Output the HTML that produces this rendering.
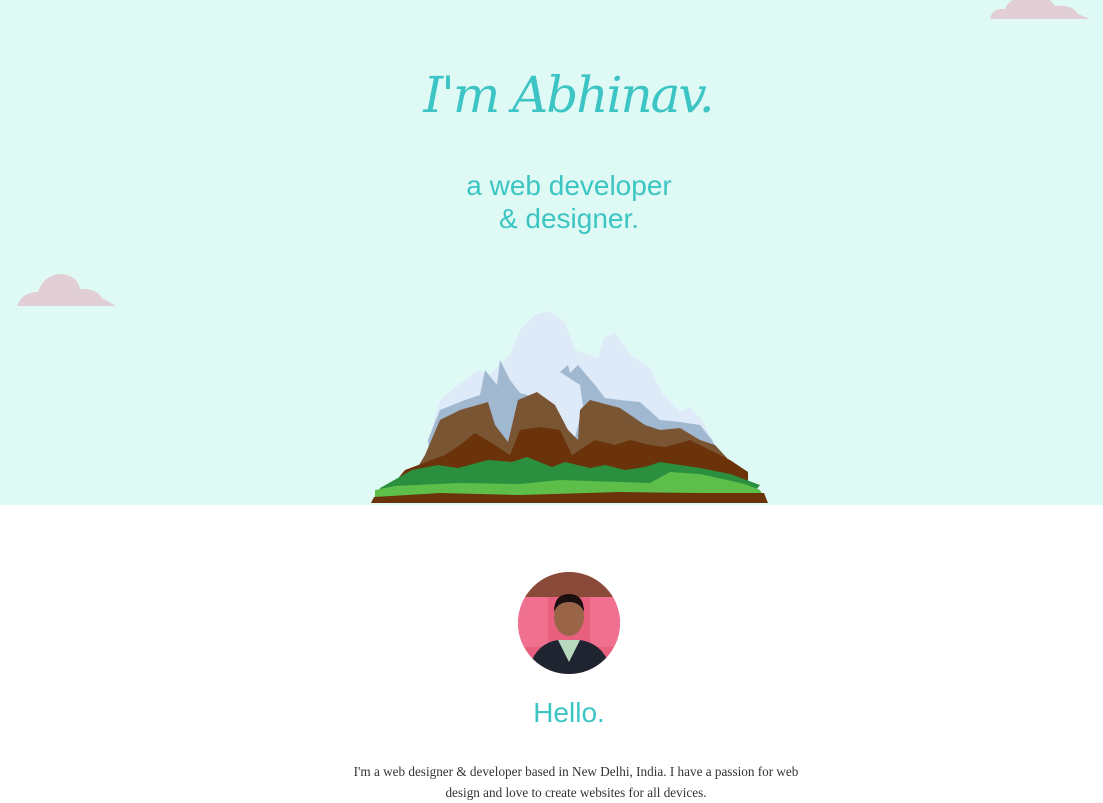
<!DOCTYPE html>
<html><head><meta charset="utf-8"><style>
body{margin:0;width:1103px;height:803px;overflow:hidden;background:#fff;font-family:"Liberation Sans",sans-serif}
.hero{position:absolute;left:0;top:0;width:1103px;height:505px;background:#dffaf5}
h1{position:absolute;top:66px;left:0;width:1136px;text-align:center;margin:0;font:italic 400 50px "DejaVu Serif","Liberation Serif",serif;color:#3cc5c4;letter-spacing:-2px}
.sub{position:absolute;top:169px;left:0;width:1138px;text-align:center;font-size:28px;line-height:33px;color:#3cc5c3}
.hello{position:absolute;top:697px;left:0;width:1138px;text-align:center;font-size:28px;color:#3cc5c3}
.p{position:absolute;top:761px;left:0;width:1152px;text-align:center;font:13.2px/21px "Liberation Serif",serif;color:#333}
</style></head><body>
<div class="hero"></div>
<svg style="position:absolute;left:0;top:0" width="1103" height="510">
<g fill="#e2cfd6">
<path d="M990 19 Q992 8 1005 9 Q1010 -4 1030 -3 Q1048 -6 1055 6 Q1072 4 1078 14 L1090 19Z"/>
<path d="M17 306 Q22 292 38 292 Q44 274 62 274 Q78 276 80 289 Q96 288 102 298 L116 306Z"/>
</g>
<polygon fill="#dfeaf8" points="428,440 440,400 458,385 478,370 490,375 510,355 520,330 535,315 548,311 565,322 575,350 598,358 604,338 616,333 630,355 650,368 662,393 680,412 690,407 702,420 712,440 720,455 430,455"/>
<polygon fill="#a0b8d0" points="428,440 440,410 465,400 480,395 485,370 497,385 500,360 510,380 520,393 545,400 560,420 575,438 583,405 580,385 560,372 568,365 570,373 578,365 595,385 605,398 620,400 640,402 660,420 680,422 700,425 712,440 720,455 430,460"/>
<polygon fill="#7a5534" points="425,455 440,420 460,410 488,402 495,425 508,442 518,400 537,392 555,405 568,430 578,440 580,410 590,400 620,408 645,425 660,430 680,428 700,440 715,445 738,470 410,480"/>
<polygon fill="#6b3309" points="405,470 445,455 460,445 475,433 495,445 510,455 520,430 540,427 560,430 572,455 595,440 615,445 630,440 650,445 665,447 690,440 700,445 730,460 748,472 748,500 380,500"/>
<polygon fill="#2a8f3f" points="380,488 412,470 438,465 458,468 488,460 512,462 527,457 552,467 565,462 590,468 605,465 625,470 645,467 660,462 700,468 730,474 760,485 752,495 380,495"/>
<polygon fill="#5dbf4a" points="375,490 395,486 460,483 520,484 560,480 620,482 650,483 670,472 700,474 745,484 760,490 763,495 375,497"/>
<polygon fill="#6b3309" points="374,497 440,493 520,495 620,492 700,493 764,493 768,503 371,503"/>
</svg>
<h1>I'm Abhinav.</h1>
<div class="sub">a web developer<br>&amp; designer.</div>
<svg style="position:absolute;left:518px;top:572px" width="102" height="102">
<defs><clipPath id="c"><circle cx="51" cy="51" r="51"/></clipPath></defs>
<g clip-path="url(#c)">
<rect width="102" height="102" fill="#e8607e"/>
<rect x="0" y="0" width="102" height="25" fill="#8a4a3a"/>
<rect x="0" y="25" width="30" height="50" fill="#f07090"/>
<rect x="72" y="25" width="30" height="50" fill="#f07090"/>
<path d="M10 102 Q15 72 40 68 L62 68 Q88 72 94 102Z" fill="#1e2430"/>
<path d="M40 68 L51 90 L62 68Z" fill="#b8d8c0"/>
<ellipse cx="51" cy="45" rx="15" ry="19" fill="#9a6448"/>
<path d="M36 40 Q36 22 51 22 Q66 22 66 40 Q62 30 51 30 Q40 30 36 40Z" fill="#1a1010"/>
</g></svg>
<div class="hello">Hello.</div>
<div class="p">I'm a web designer &amp; developer based in New Delhi, India. I have a passion for web<br>design and love to create websites for all devices.</div>
</body></html>
